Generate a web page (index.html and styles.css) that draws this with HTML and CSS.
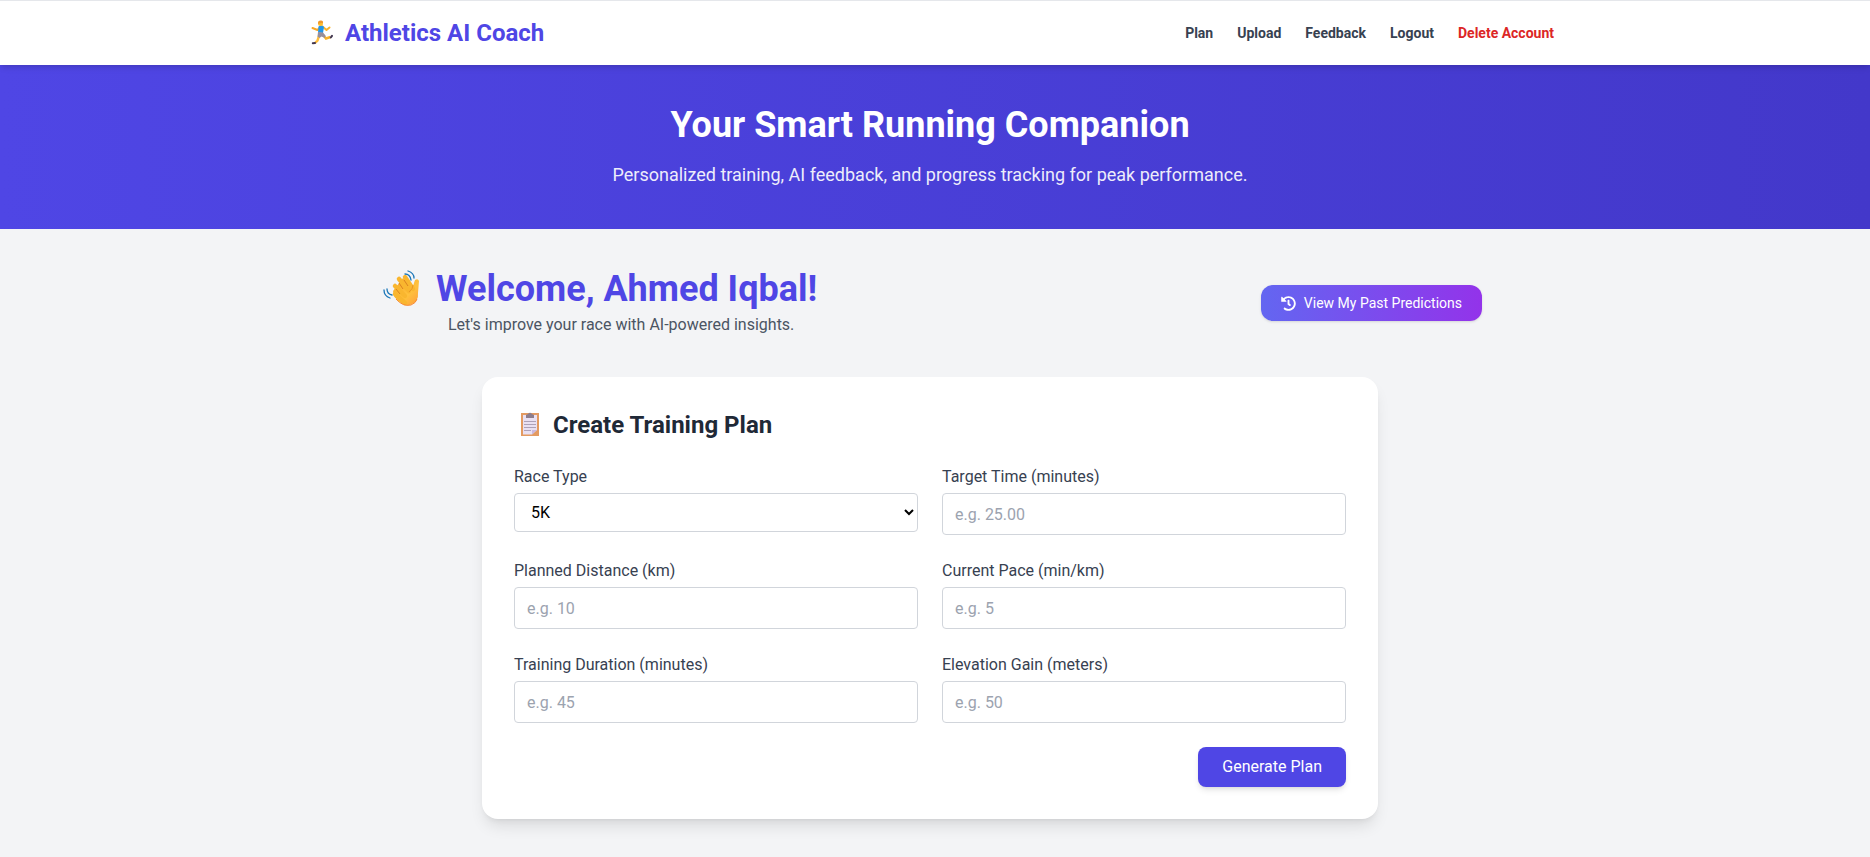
FILE: index.html
```html
<!DOCTYPE html>
<html lang="en">
<head>
<meta charset="utf-8">
<meta name="viewport" content="width=device-width, initial-scale=1">
<title>Athletics AI Coach</title>
<link rel="stylesheet" href="styles.css">
</head>
<body>
<header class="site-header">
  <div class="header-inner">
    <div class="brand">
      <svg class="emoji" viewBox="0 0 33 32" aria-hidden="true">
        <path d="M15 9.500 11.500 13 6.500 11" fill="none" stroke="#f9a825" stroke-width="2" stroke-linecap="round" stroke-linejoin="round"/>
        <path d="M16.500 9.500 20.500 13 23.500 10.500" fill="none" stroke="#f9b32a" stroke-width="2" stroke-linecap="round" stroke-linejoin="round"/>
        <path d="M13 19 11.500 23.500 9 26" fill="none" stroke="#ffbd3a" stroke-width="2.400"/>
        <path d="M17.500 18.500 20 21.500 24.500 20" fill="none" stroke="#f9b32a" stroke-width="2.400"/>
        <path d="M12.500 9.500Q15.500 7.500 18 10L17 16 12 15.500Z" fill="#2196e8"/>
        <path d="M12 15 17 15.500 19.500 18.500 19 21 15.500 19.500 13.500 21 11.500 19.500Z" fill="#978f9c"/>
        <circle cx="14.500" cy="6.500" r="2.500" fill="#ffbd2e"/>
        <path d="M12.200 7Q11.500 3.500 15 3.600 17.500 3.800 17 6 14.500 5.500 12.200 7Z" fill="#f0982b"/>
        <path d="M24.800 20.500 26 18.800M6.800 26.200 9 26" stroke="#41364f" stroke-width="2" stroke-linecap="round"/>
      </svg>
      <span>Athletics AI Coach</span>
    </div>
    <nav class="nav">
      <a href="#">Plan</a>
      <a href="#">Upload</a>
      <a href="#">Feedback</a>
      <a href="#">Logout</a>
      <a href="#" class="danger">Delete Account</a>
    </nav>
  </div>
</header>
<section class="hero">
  <h1>Your Smart Running Companion</h1>
  <p>Personalized training, AI feedback, and progress tracking for peak performance.</p>
</section>
<main class="main">
  <div class="welcome">
    <div>
      <h2 class="welcome-title">
        <svg class="emoji emoji-large" viewBox="0 0 49 40" aria-hidden="true">
          <defs><linearGradient id="hand" x1="0" y1="0" x2="1" y2="1"><stop offset="0" stop-color="#f7a928"/><stop offset=".6" stop-color="#ffc13d"/><stop offset="1" stop-color="#ff9c3a"/></linearGradient></defs>
          <path d="M15 22 16.500 28Q25 38 32 36 41 33 40 24L41 12Q40 9 37 11L35 17 25 9Z" fill="url(#hand)"/>
          <path d="M17 25 27 34M17 17 27 27M21 10 31 22M27 8 35 20" stroke="#f9b62f" stroke-width="4.500" stroke-linecap="round"/>
          <path d="M18 20 22 25M21 14 25 20M26 11 30 17" fill="none" stroke="#d98320" stroke-width="1"/>
          <path d="M18 30Q25 38 33 36 38 34 39 30" fill="none" stroke="#f78a35" stroke-width="1"/>
          <path d="M35 16Q35 20 31 23" fill="none" stroke="#e99524" stroke-width="1"/>
          <path d="M27 5Q32 5 33 11M30 2Q36 4 36 9M9 20Q9 25 14 26M6 21Q6 27 12 29" fill="none" stroke="#1976b8" stroke-width="1.300" stroke-linecap="round"/>
        </svg>
        <span>Welcome, Ahmed Iqbal!</span>
      </h2>
      <p class="welcome-text">Let's improve your race with AI-powered insights.</p>
    </div>
    <a href="#" class="history">
      <svg viewBox="0 0 512 512" width="15" height="15" fill="currentColor" aria-hidden="true"><path d="M504 255.531c.253 136.640-111.180 248.372-247.820 248.468-59.015.042-113.223-20.530-155.822-54.911-11.077-8.940-11.905-25.541-1.839-35.607l11.267-11.267c8.609-8.609 22.353-9.551 31.891-1.984C173.062 425.135 212.781 440 256 440c101.705 0 184-82.311 184-184 0-101.705-82.311-184-184-184-48.814 0-93.149 18.969-126.068 49.932l50.754 50.754c10.080 10.080 2.941 27.314-11.313 27.314H24c-8.837 0-16-7.163-16-16V38.627c0-14.254 17.234-21.393 27.314-11.314l49.372 49.372C129.209 34.136 189.552 8 256 8c136.810 0 247.747 110.780 248 247.531zm-180.912 78.784l9.823-12.630c8.138-10.463 6.253-25.542-4.210-33.679L288 256.349V152c0-13.255-10.745-24-24-24h-16c-13.255 0-24 10.745-24 24v135.651l65.409 50.874c10.463 8.137 25.541 6.253 33.679-4.210z"/></svg>
      <span>View My Past Predictions</span>
    </a>
  </div>
  <section class="card">
    <h2 class="card-title">
      <svg class="emoji" viewBox="0 0 33 32" aria-hidden="true">
        <path d="M7 4H25V27H7Z" fill="#e39a61"/>
        <path d="M9 6H23V21L18 25.500H9Z" fill="#e9e0f2"/>
        <path d="M18 25.500V21H23Z" fill="#c9b8df"/>
        <path d="M12 9V6L14 5Q16 2.500 18 5L20 6V9Z" fill="#8d7d8c"/>
        <path d="M10 12.500H22M10 15.500H22M10 18.500H22M10 21.500H17" stroke="#ada1b8" stroke-width="1"/>
      </svg>
      <span>Create Training Plan</span>
    </h2>
    <form>
      <div class="fields">
        <div class="field"><label for="race">Race Type</label><select id="race"><option>5K</option><option>10K</option><option>Half Marathon</option><option>Marathon</option></select></div>
        <div class="field"><label for="target">Target Time (minutes)</label><input id="target" type="text" placeholder="e.g. 25.00"></div>
        <div class="field"><label for="distance">Planned Distance (km)</label><input id="distance" type="text" placeholder="e.g. 10"></div>
        <div class="field"><label for="pace">Current Pace (min/km)</label><input id="pace" type="text" placeholder="e.g. 5"></div>
        <div class="field"><label for="duration">Training Duration (minutes)</label><input id="duration" type="text" placeholder="e.g. 45"></div>
        <div class="field"><label for="elevation">Elevation Gain (meters)</label><input id="elevation" type="text" placeholder="e.g. 50"></div>
      </div>
      <div class="actions"><button type="submit">Generate Plan</button></div>
    </form>
  </section>
</main>
</body>
</html>
```

FILE: styles.css
```css
* { box-sizing: border-box; }
:root { --gutter: 10px; }
body {
  margin: 0;
  background: #f3f4f6;
  color: #1f2937;
  font: 16px/24px Roboto, sans-serif;
}
h1, h2, p { margin: 0; }
a { text-decoration: none; }

.site-header {
  position: relative;
  z-index: 1;
  padding-right: var(--gutter);
  background: #fff;
  border-top: 1px solid #e5e7eb;
  box-shadow: 0 4px 6px -1px rgba(0, 0, 0, .1), 0 2px 4px -2px rgba(0, 0, 0, .1);
}
.header-inner {
  display: flex;
  align-items: center;
  justify-content: space-between;
  max-width: 1280px;
  margin: 0 auto;
  padding: 16px;
}
.brand {
  display: flex;
  align-items: center;
  gap: 6px;
  color: #4f46e5;
  font-size: 24px;
  font-weight: 700;
  line-height: 32px;
}
.emoji { width: 33px; height: 32px; flex: none; }
.emoji-large { width: 49px; height: 40px; }
.nav { display: flex; gap: 24px; font-size: 14px; font-weight: 700; line-height: 20px; }
.nav a { color: #374151; }
.nav .danger { color: #dc2626; }

.hero {
  padding: 40px calc(16px + var(--gutter)) 40px 16px;
  background: linear-gradient(to right, #4f46e5, #4338ca);
  color: #fff;
  text-align: center;
}
.hero h1 { font-size: 36px; font-weight: 700; line-height: 40px; }
.hero p { margin-top: 16px; font-size: 18px; line-height: 28px; opacity: .9; }

.main { padding: 40px calc(16px + var(--gutter)) 38px 16px; }
.welcome {
  display: flex;
  align-items: center;
  justify-content: space-between;
  max-width: 1104px;
  margin: 0 auto 40px;
}
.welcome-title {
  display: flex;
  align-items: center;
  gap: 9px;
  color: #4f46e5;
  font-size: 36px;
  font-weight: 700;
  line-height: 40px;
}
.welcome-text { margin: 4px 0 0 70px; color: #4b5563; }
.history {
  display: flex;
  align-items: center;
  gap: 8px;
  padding: 8px 20px;
  border-radius: 12px;
  background: linear-gradient(to right, #6366f1, #9333ea);
  box-shadow: 0 1px 3px rgba(0, 0, 0, .1), 0 1px 2px -1px rgba(0, 0, 0, .1);
  color: #fff;
  font-size: 14px;
  font-weight: 400;
  line-height: 20px;
}

.card {
  max-width: 896px;
  margin: 0 auto;
  padding: 32px;
  border-radius: 16px;
  background: #fff;
  box-shadow: 0 10px 15px -3px rgba(0, 0, 0, .1), 0 4px 6px -4px rgba(0, 0, 0, .1);
}
.card-title {
  display: flex;
  align-items: center;
  gap: 6px;
  margin-bottom: 24px;
  font-size: 24px;
  font-weight: 700;
  line-height: 32px;
}
.fields { display: grid; grid-template-columns: 1fr 1fr; gap: 24px; }
.field { display: flex; flex-direction: column; gap: 4px; }
label { color: #374151; }
input, select {
  width: 100%;
  border: 1px solid #d1d5db;
  border-radius: 4px;
  background: #fff;
  color: #000;
  font: inherit;
}
input { height: 42px; padding: 8px 12px; }
input::placeholder { color: #9ca3af; }
select { height: 39px; padding: 8px 12px; }
.actions { display: flex; justify-content: flex-end; margin-top: 24px; }
button {
  padding: 8px 24px;
  border: 0;
  border-radius: 8px;
  background: #4f46e5;
  box-shadow: 0 4px 6px -1px rgba(0, 0, 0, .1), 0 2px 4px -2px rgba(0, 0, 0, .1);
  color: #fff;
  font: 400 16px/24px Roboto, sans-serif;
}
```
